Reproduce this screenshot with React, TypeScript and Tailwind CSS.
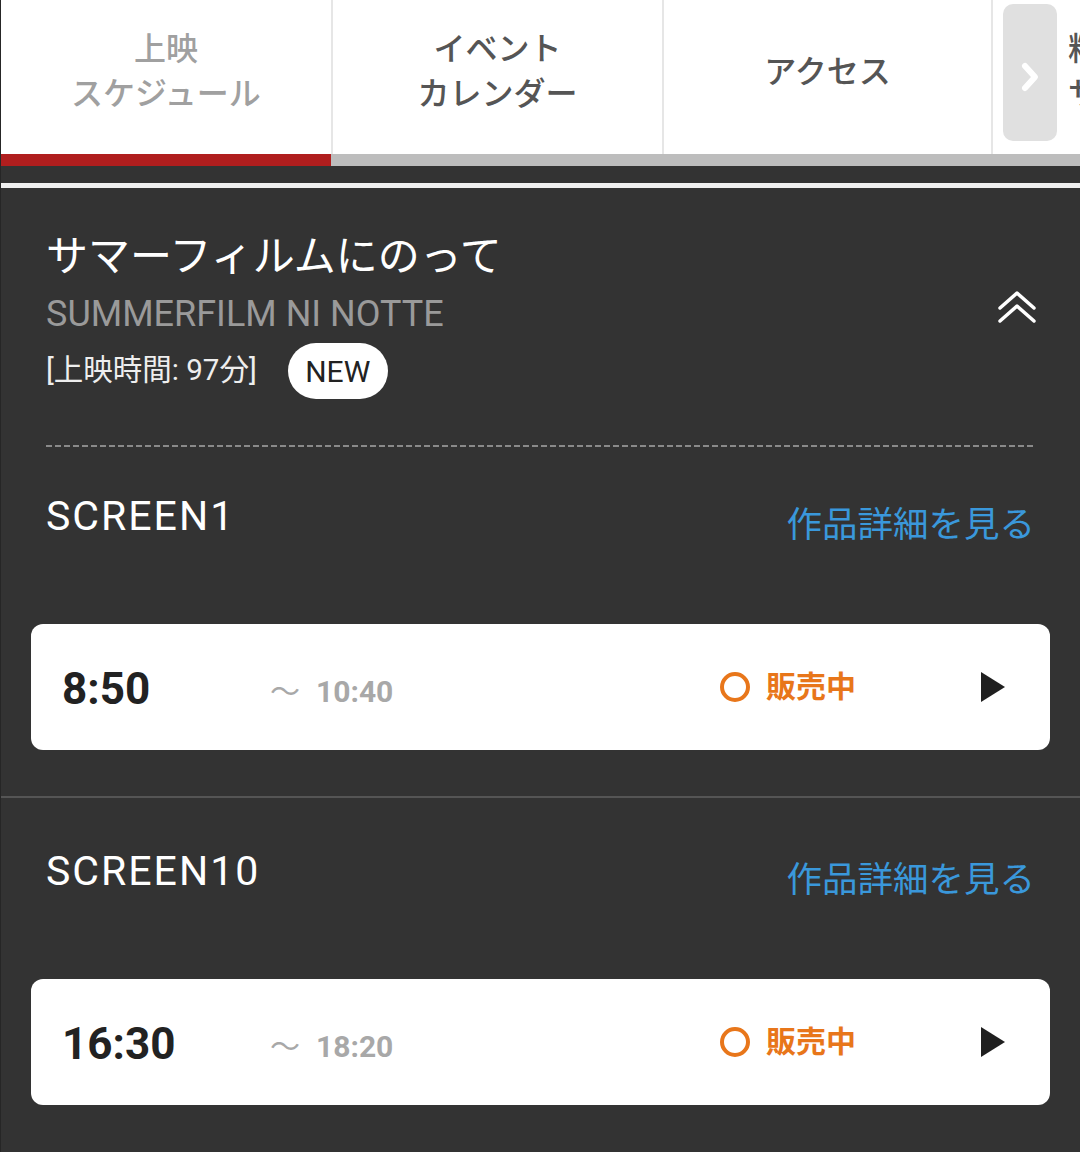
const tabs = [
  { lines: ['上映', 'スケジュール'], active: true, w: 'w-[332px]' },
  { lines: ['イベント', 'カレンダー'], active: false, w: 'w-[331px]' },
  { lines: ['アクセス'], active: false, w: 'w-[329px]' },
];

const shows = [
  { screen: 'SCREEN1', start: '8:50', end: '10:40' },
  { screen: 'SCREEN10', start: '16:30', end: '18:20' },
];

const DoubleUp = () => (
  <svg width="40" height="34" viewBox="0 0 40 34" fill="none" stroke="#fff" strokeWidth="3.5" strokeLinecap="round" strokeLinejoin="round">
    <polyline points="3,18 20,3 37,18" />
    <polyline points="3,31 20,16 37,31" />
  </svg>
);

const Play = () => (
  <svg width="24" height="30" viewBox="0 0 24 30">
    <polygon points="0,0 24,15 0,30" fill="#1f1f1f" />
  </svg>
);

const ShowCard = ({ start, end }: { start: string; end: string }) => (
  <div className="mx-[30px] h-[126px] bg-white rounded-[12px] flex items-center pl-[31px] pr-[45px]">
    <div className="w-[208px] text-[44px] font-bold text-[#222] leading-none mt-[3px]">{start}</div>
    <div className="flex items-center gap-[16px] text-[#a8a8a8] mt-[10px]">
      <span className="text-[30px] leading-none">〜</span>
      <span className="text-[30px] font-bold leading-none">{end}</span>
    </div>
    <div className="ml-auto flex items-center gap-[16px] mr-[125px]">
      <div className="w-[30px] h-[30px] rounded-full border-[4px] border-[#e8761a]" />
      <span className="text-[30px] font-bold text-[#e8761a] leading-none">販売中</span>
    </div>
    <Play />
  </div>
);

export default function App() {
  return (
    <div className="w-[1080px] h-[1152px] overflow-hidden bg-[#333333] border-l border-[#262626] font-['Roboto','Noto_Sans_CJK_JP',sans-serif]">
      {/* tab bar */}
      <div className="relative flex h-[154px] bg-white overflow-hidden">
        {tabs.map((t, i) => (
          <div
            key={i}
            className={`${t.w} flex-none border-r-2 border-[#e6e6e6] flex items-center justify-center pb-[10px] text-center text-[32px] leading-[45px] font-medium ${t.active ? 'text-[#a0a0a0]' : 'text-[#555]'}`}
          >
            <div>
              {t.lines.map((l) => (
                <div key={l}>{l}</div>
              ))}
            </div>
          </div>
        ))}
        <div className="w-[330px] flex-none flex items-center pl-[75px] pb-[10px] text-[32px] leading-[45px] font-medium text-[#555]">
          <div>
            <div>料金</div>
            <div>サービス</div>
          </div>
        </div>
        <div className="absolute left-[1002px] top-[4px] w-[54px] h-[137px] rounded-[10px] bg-[#e0e0e0] flex items-center justify-center">
          <svg className="mt-[8px]" width="22" height="32" viewBox="0 0 22 32" fill="none" stroke="#fff" strokeWidth="6" strokeLinecap="round" strokeLinejoin="round">
            <polyline points="6,5 16,16 6,27" />
          </svg>
        </div>
      </div>
      <div className="flex h-[12px]">
        <div className="w-[330px] bg-[#b01e1e]" />
        <div className="flex-1 bg-[#bdbdbd]" />
      </div>
      <div className="h-[17px]" />
      <div className="h-[5px] bg-[#f0f0f0]" />

      {/* movie header */}
      <div className="flex items-center justify-between pl-[45px] pr-[43px] pt-[45px]">
        <div>
          <div className="text-[42px] leading-[48px] text-white">サマーフィルムにのって</div>
          <div className="mt-[11px] text-[36px] leading-[44px] text-[#9a9a9a]">SUMMERFILM NI NOTTE</div>
          <div className="mt-[7px] flex items-center gap-[31px]">
            <span className="text-[29.5px] leading-none text-[#eeeeee]">[上映時間: 97分]</span>
            <span className="w-[100px] h-[56px] rounded-full bg-white flex items-center justify-center text-[30px] text-[#222]">NEW</span>
          </div>
        </div>
        <div className="mb-[18px]">
          <DoubleUp />
        </div>
      </div>
      <div className="mt-[46px] ml-[45px] mr-[45px] h-[2px] bg-[repeating-linear-gradient(to_right,#8a8a8a_0_6px,transparent_6px_9px)]" />

      {shows.map((s, i) => (
        <div key={s.screen} className={i > 0 ? 'border-t-2 border-[#555]' : ''}>
          <div className={`flex items-center justify-between pl-[45px] pr-[45px] h-[60px] ${i > 0 ? 'mt-[44px]' : 'mt-[40px]'}`}>
            <span className="text-[41px] tracking-[2px] text-white">{s.screen}</span>
            <span className="text-[35.5px] text-[#3a98db] mt-[18px]">作品詳細を見る</span>
          </div>
          <div className="mt-[77px]">
            <ShowCard start={s.start} end={s.end} />
          </div>
          <div className="h-[46px]" />
        </div>
      ))}
    </div>
  );
}
